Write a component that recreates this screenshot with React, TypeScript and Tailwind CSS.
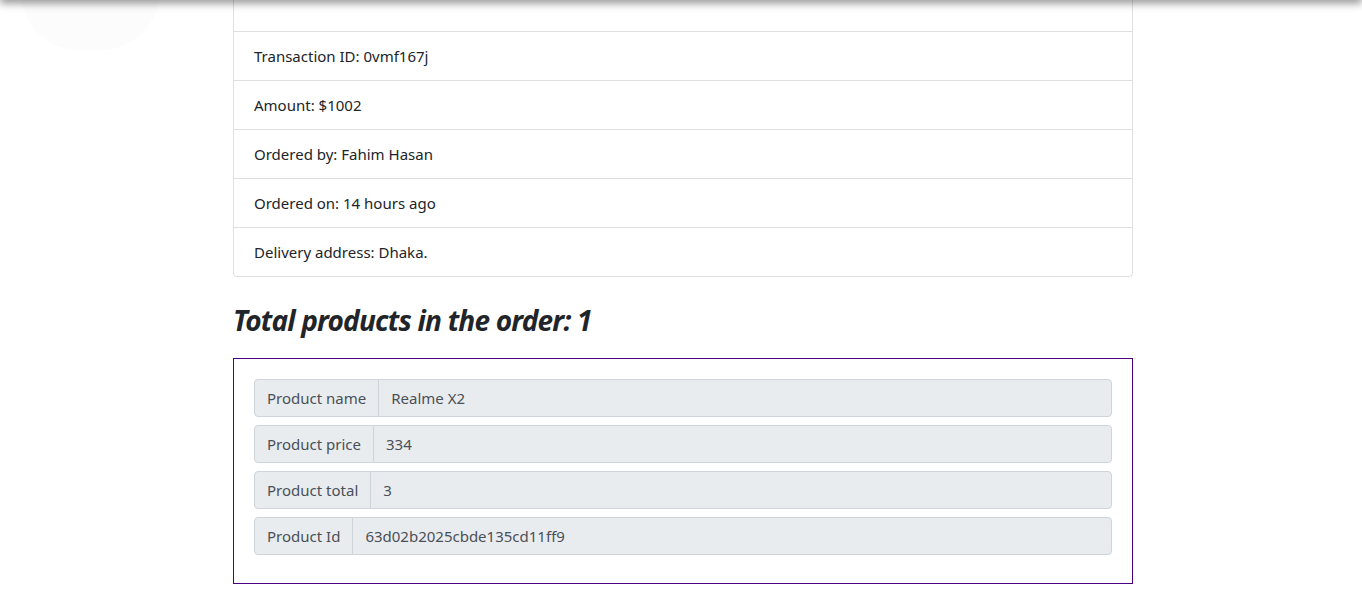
const details = [
  '',
  'Transaction ID: 0vmf167j',
  'Amount: $1002',
  'Ordered by: Fahim Hasan',
  'Ordered on: 14 hours ago',
  'Delivery address: Dhaka.',
];

const products = [
  { label: 'Product name', value: 'Realme X2' },
  { label: 'Product price', value: '334' },
  { label: 'Product total', value: '3' },
  { label: 'Product Id', value: '63d02b2025cbde135cd11ff9' },
];

function Field({ label, value }: { label: string; value: string }) {
  return (
    <div className="flex h-[38px] rounded border border-[#ced4da] bg-[#e9ecef] text-[15px] text-[#495057]">
      <span className="flex items-center border-r border-[#ced4da] px-3">{label}</span>
      <span className="flex items-center px-3">{value}</span>
    </div>
  );
}

export default function App() {
  return (
    <div
      className="relative min-h-[607px] overflow-hidden bg-white text-[#212529]"
      style={{ fontFamily: '"Noto Sans", "Open Sans", sans-serif' }}
    >
      <div className="pointer-events-none absolute left-0 right-0 top-[-10px] z-10 h-[10px] bg-white shadow-[0_3px_8px_rgba(0,0,0,0.45)]" />
      <div className="pointer-events-none absolute left-[20px] top-[-70px] h-[120px] w-[140px] rounded-full bg-[#fcfcfc]" />

      <div className="mx-auto w-[900px] translate-x-[2px] pb-6">
        <ul className="-mt-[19px] rounded border border-[#dfdfdf]">
          {details.map((d, i) => (
            <li
              key={i}
              className={`h-[49px] px-5 py-3 text-[15px] leading-6 ${i > 0 ? 'border-t border-[#dfdfdf]' : ''}`}
            >
              {d}
            </li>
          ))}
        </ul>

        <h2 className="mt-6 mb-[19px] text-[28px] font-bold italic leading-[38px] tracking-[-0.8px]">
          Total products in the order: 1
        </h2>

        <div className="flex flex-col gap-2 border border-[#4b0082] p-5 pb-[28px]">
          {products.map((p) => (
            <Field key={p.label} label={p.label} value={p.value} />
          ))}
        </div>
      </div>
    </div>
  );
}
